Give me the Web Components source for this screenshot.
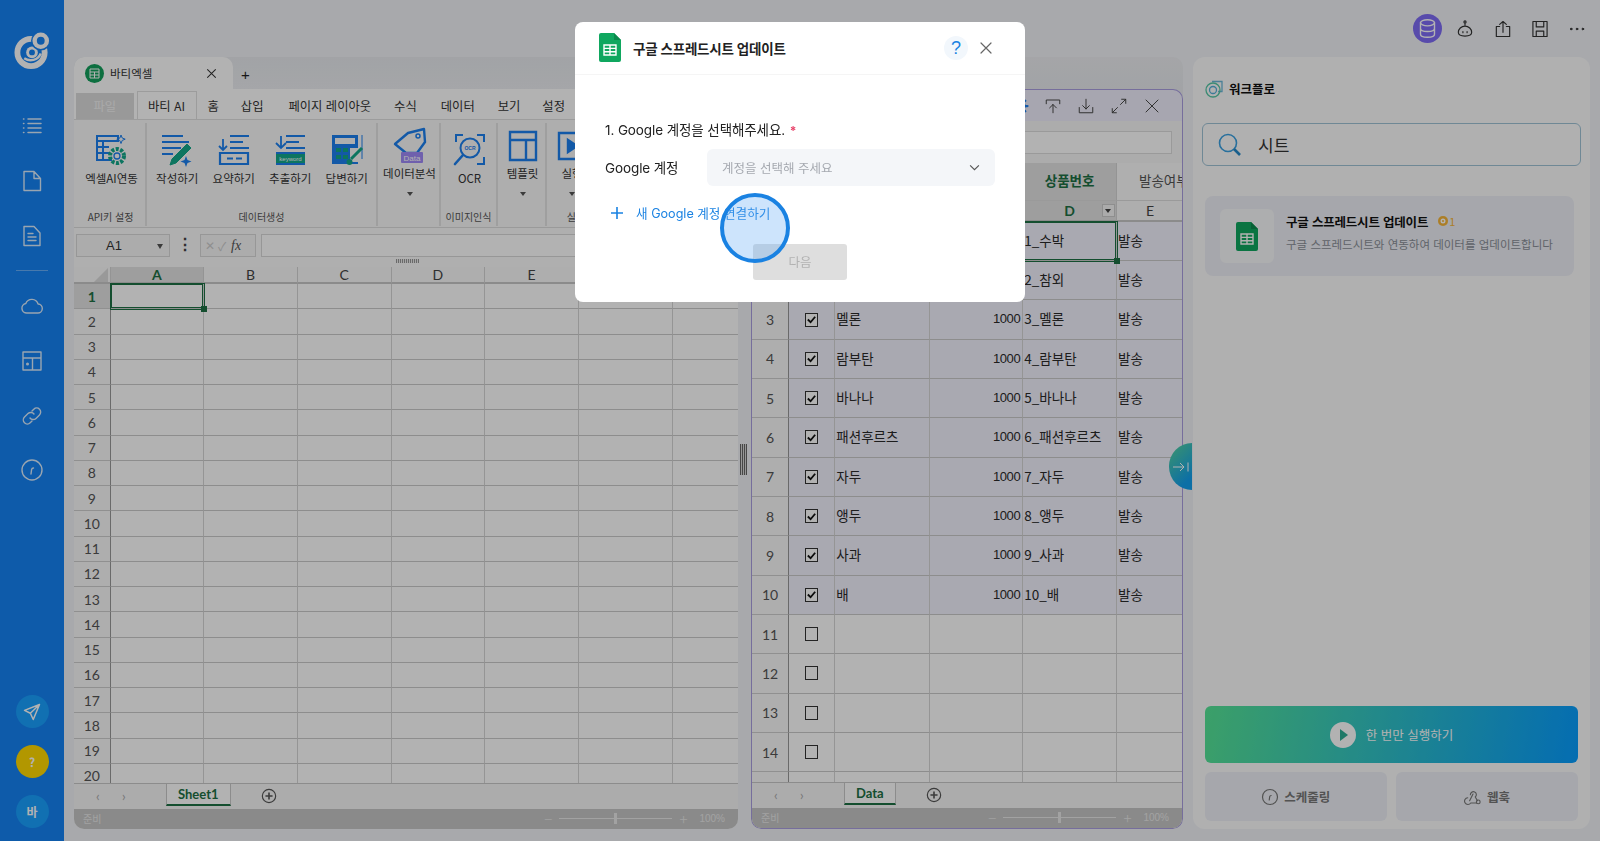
<!DOCTYPE html>
<html lang="ko">
<head>
<meta charset="utf-8">
<title>바티 AI</title>
<style>
    html, body { margin: 0; height: 100%; overflow: hidden; }
    body { font-family: "Noto Sans CJK KR", "Noto Sans", sans-serif; background: #f1f3f7; color: #222; }
</style>
</head>
<body>
<app-shell>
    <app-sidebar slot="side"></app-sidebar>
    <top-actions slot="top"></top-actions>
    <sheet-panel slot="left" sheet="Sheet1">
        <excel-tabstrip slot="head"></excel-tabstrip>
        <excel-ribbon slot="head"></excel-ribbon>
        <excel-formula slot="head"></excel-formula>
        <sheet-grid id="grid-left"></sheet-grid>
    </sheet-panel>
    <sheet-panel slot="right" sheet="Data" tint>
        <sheet-titlebar slot="head"></sheet-titlebar>
        <sheet-grid id="grid-right"></sheet-grid>
    </sheet-panel>
    <workflow-panel slot="flow"></workflow-panel>
</app-shell>
<modal-dialog heading="구글 스프레드시트 업데이트"></modal-dialog>
<click-ripple></click-ripple>

<script>
const SHEET_ICON = `<svg viewBox="0 0 22 29" width="22" height="29"><path d="M2 0h13l7 7v20a2 2 0 0 1-2 2H2a2 2 0 0 1-2-2V2a2 2 0 0 1 2-2z" fill="#0fa75f"/><path d="M15 0l7 7h-7z" fill="#0b8a4d"/><path d="M5 12h12v10H5zM5 15.4h12M5 18.8h12M11 12v10" fill="none" stroke="#fff" stroke-width="1.4"/></svg>`;

const line = (inner, w = 24, sw = 1.5, vb = 24) => `<svg viewBox="0 0 ${vb} ${vb}" width="${w}" height="${w}" fill="none" stroke="currentColor" stroke-width="${sw}" stroke-linecap="round" stroke-linejoin="round">${inner}</svg>`;

class AppShell extends HTMLElement {
    constructor() {
        super();
        this.attachShadow({mode: 'open'}).innerHTML = `
        <style>
            :host { display: flex; width: 1600px; height: 841px; background: #f1f3f7; }
            #main { flex: 1; display: flex; flex-direction: column; min-width: 0; padding: 0 10px 12px; box-sizing: border-box; }
            #work { flex: 1; display: flex; min-height: 0; position: relative; }
            #split { width: 13px; display: flex; align-items: center; justify-content: flex-start; margin-top: 32px; }
            #grip { width: 7px; height: 31px; margin-left: 2px; background: repeating-linear-gradient(90deg, #666 0 1px, #d8d8d8 1px 2px); }
            #flow { margin-left: 10px; display: flex; width: 397px; }
            #l { display: flex; width: 664px; }
            #r { display: flex; width: 432px; }
            #collapse { position: absolute; left: 1095px; top: 386px; width: 23px; height: 47px; border-radius: 24px 0 0 24px; background: linear-gradient(135deg, #58d69a, #12a0ee 80%); color: #fff; display: flex; align-items: center; justify-content: center; }
        </style>
        <slot name="side"></slot>
        <div id="main">
            <slot name="top"></slot>
            <div id="work">
                <div id="l"><slot name="left"></slot></div>
                <div id="split"><div id="grip"></div></div>
                <div id="r"><slot name="right"></slot></div>
                <div id="flow"><slot name="flow"></slot></div>
                <div id="collapse"><svg width="18" height="14" viewBox="0 0 18 14" fill="none" stroke="currentColor" stroke-width="1"><path d="M1 7h11M8 3l4 4-4 4M16 2.500v9"/></svg></div>
            </div>
        </div>`;
    }
}
customElements.define('app-shell', AppShell);

class AppSidebar extends HTMLElement {
    constructor() {
        super();
        const icons = [
            `<path d="M8 5h13M8 9.500h13M8 14h13M8 18.500h13" stroke-width="1.500"/><path d="M3.500 5h.4M3.500 9.500h.4M3.500 14h.4M3.500 18.500h.4" stroke-width="1.500"/>`,
            `<path d="M4 2.500h10l6.500 7V21.500H4zM14 2.500v7h6.500"/>`,
            `<path d="M4 2.500h10l6 6.500V21.500H4zM8 9.500h5M8 13h8M8 16.500h8"/>`,
            null,
            `<path d="M7 19h10.500a4.500 4.500 0 0 0 .6-9A6.500 6.500 0 0 0 5.800 9.500 4.800 4.800 0 0 0 7 19z"/>`,
            `<path d="M3 3h18v18H3zM3 9h18M12.500 9v12"/><circle cx="7.500" cy="15" r=".8" fill="currentColor"/>`,
            `<path d="M10 14a4 4 0 0 0 6 .4l3.500-3.500a4 4 0 0 0-5.700-5.700L12 7"/><path d="M14 10a4 4 0 0 0-6-.4l-3.500 3.500a4 4 0 0 0 5.700 5.700L12 17"/>`,
            `<circle cx="12" cy="12" r="10"/><path d="M11 16l.6-4.500c.2-1 .9-1.500 1.900-1.500"/>`
        ];
        this.attachShadow({mode: 'open'}).innerHTML = `
        <style>
            :host { display: flex; flex-direction: column; align-items: center; width: 64px; height: 841px; background: #1583f4; color: #fff; flex: none; font-family: "Noto Sans CJK KR", sans-serif; box-sizing: border-box; }
            #logo { margin: 32px 0 0 -1px; height: 37px; }
            nav { display: flex; flex-direction: column; align-items: center; margin-top: 30px; }
            .ic { height: 54.700px; width: 64px; display: flex; align-items: center; justify-content: center; }
            .ic svg { opacity: .85; }
            hr { width: 32px; margin: 7px 0 8px; border: 0; border-top: 1px solid rgba(255,255,255,.35); }
            #foot { margin-top: auto; display: flex; flex-direction: column; gap: 17px; padding-bottom: 13px; align-items: center; }
            .round { width: 33px; height: 33px; border-radius: 50%; display: flex; align-items: center; justify-content: center; background: #19a1ff; font-size: 12px; font-weight: 700; color: #fff; }
            .gold { background: #ffd900; }
        </style>
        <svg id="logo" viewBox="0 0 36 38" width="36" height="38" fill="none">
            <circle cx="17" cy="21" r="14" stroke="#fff" stroke-width="6"/>
            <path d="M10 27c6 4 14 2 17-5" stroke="#fff" stroke-width="2.500"/>
            <circle cx="18" cy="21" r="6" fill="#fff"/>
            <circle cx="18" cy="21" r="3" fill="#1583f4"/>
            <circle cx="27" cy="9" r="10" fill="#1583f4"/>
            <circle cx="27" cy="9" r="8.500" fill="#fff"/>
            <circle cx="27" cy="9" r="4" fill="#1583f4"/>
        </svg>
        <nav>${icons.map(i => i ? `<div class="ic">${line(i, 24, 1.4)}</div>` : `<hr>`).join('')}</nav>
        <div id="foot">
            <div class="round"><svg width="20" height="20" viewBox="0 0 24 24" fill="none" stroke="#fff" stroke-width="1.800" stroke-linejoin="round"><path d="M21 3L3 10l7 3.500L13.500 21zM10 13.500L21 3"/></svg></div>
            <div class="round gold">?</div>
            <div class="round">바</div>
        </div>`;
    }
}
customElements.define('app-sidebar', AppSidebar);

class TopActions extends HTMLElement {
    constructor() {
        super();
        this.attachShadow({mode: 'open'}).innerHTML = `
        <style>
            :host { display: flex; height: 57px; flex: none; justify-content: flex-end; align-items: flex-start; padding: 14px 0 0; box-sizing: border-box; color: #333; }
            .b { width: 37.400px; height: 29px; display: flex; align-items: center; justify-content: center; }
            #db { color: #fff; }
            #db span { width: 29px; height: 29px; border-radius: 50%; background: #7f6cf5; display: flex; align-items: center; justify-content: center; }
        </style>
        <div class="b" id="db"><span>${line(`<ellipse cx="12" cy="5.500" rx="8" ry="3.500"/><path d="M4 5.500v13c0 2 3.600 3.500 8 3.500s8-1.500 8-3.500v-13M4 12c0 2 3.600 3.500 8 3.500s8-1.500 8-3.500"/>`, 21, 1.6)}</span></div>
        <div class="b">${line(`<circle cx="12" cy="3.500" r="1.300"/><path d="M12 5v3.500M4 16c0-4 3.500-7.500 8-7.500s8 3.500 8 7.500c0 3-3 4.500-8 4.500S4 19 4 16zM9.500 15v1.500M14.500 15v1.500"/>`, 20, 1.400)}</div>
        <div class="b">${line(`<path d="M8 9H4v12h16V9h-4M12 16V3M8 6.500L12 3l4 3.500"/>`, 20, 1.400)}</div>
        <div class="b">${line(`<path d="M3.500 3h17v18h-17zM7.500 3v6.500h9V3M7.500 21v-6.500h9V21"/>`, 20, 1.400)}</div>
        <div class="b" style="margin-right:-6px">${line(`<circle cx="5" cy="12" r="1" fill="currentColor"/><circle cx="12" cy="12" r="1" fill="currentColor"/><circle cx="19" cy="12" r="1" fill="currentColor"/>`, 20, 1.200)}</div>`;
    }
}
customElements.define('top-actions', TopActions);

class SheetPanel extends HTMLElement {
    constructor() {
        super();
        this.attachShadow({mode: 'open'}).innerHTML = `
        <style>
            :host { display: flex; flex-direction: column; flex: 1; min-width: 0; box-sizing: border-box; overflow: hidden; border-radius: 10px; font-family: "Noto Sans CJK KR", "Noto Sans", sans-serif; background: linear-gradient(#e8eaee, #eceef2 32px); }
            :host([tint]) { padding-top: 32px; background: linear-gradient(#ecedf1, #e8eaee 32px); }
            #body { flex: 1; display: flex; flex-direction: column; min-height: 0; background: #fff; }
            :host([tint]) #body { border: 1px solid #a99ee0; border-top: 0; border-radius: 0 0 10px 10px; overflow: hidden; }
            #tabs { height: 26px; flex: none; display: flex; align-items: stretch; background: #f6f6f6; border-top: 1px solid #c9c9c9; box-sizing: border-box; padding-left: 92px; position: relative; font-family: Lato, sans-serif; }
            .nav { position: absolute; top: 4px; color: #aaa; font-size: 13px; }
            #tab { padding: 0 11px; margin-top: -1px; background: #fff; border: 1px solid #c9c9c9; border-bottom: 2px solid #1d7044; height: 23px; box-sizing: border-box; display: flex; align-items: center; color: #1d7044; font-weight: 700; font-size: 13px; }
            #add { margin: 3px 0 0 29px; width: 18px; height: 18px; color: #555; }
            #status { height: 20.300px; flex: none; display: flex; align-items: center; background: #c6c6c6; color: #e9e9e9; font-size: 10px; padding: 0 13px 0 9px; box-sizing: border-box; }
            #status .sp { flex: 1; }
            #slider { width: 113px; height: 1px; background: #e9e9e9; margin: 0 7px; position: relative; }
            #slider i { position: absolute; left: 55px; top: -5px; width: 3px; height: 11px; background: #e9e9e9; }
            #pct { margin-left: 12px; font-family: "Liberation Sans", sans-serif; }
            .pm { font-size: 15px; font-weight: 300; line-height: 1; }
        </style>
        <slot name="head"></slot>
        <div id="body">
            <slot></slot>
            <div id="tabs">
                <span class="nav" style="left:22px">‹</span><span class="nav" style="left:48px">›</span>
                <div id="tab">${this.getAttribute('sheet')}</div>
                <div id="add"><svg viewBox="0 0 18 18" width="16" height="16" style="margin:1px" fill="none" stroke="currentColor" stroke-width="1.300"><circle cx="9" cy="9" r="7.500"/><path d="M5 9h8M9 5v8" stroke-width="1.800"/></svg></div>
            </div>
            <div id="status"><span>준비</span><span class="sp"></span><span class="pm">−</span><div id="slider"><i></i></div><span class="pm">+</span><span id="pct">100%</span></div>
        </div>`;
    }
}
customElements.define('sheet-panel', SheetPanel);

class ExcelTabstrip extends HTMLElement {
    constructor() {
        super();
        this.attachShadow({mode: 'open'}).innerHTML = `
        <style>
            :host { display: flex; height: 32px; align-items: stretch; }
            #t { width: 159px; background: #fff; border-radius: 10px 10px 0 0; display: flex; align-items: center; padding: 0 16px 0 11px; box-sizing: border-box; font-size: 11.500px; color: #333; }
            #g { width: 19px; height: 19px; border-radius: 50%; background: #14a05c; color: #fff; display: flex; align-items: center; justify-content: center; margin-right: 6px; }
            .s { flex: 1; }
            #plus { margin-left: 8px; align-self: center; font-size: 15px; color: #222; font-family: "Liberation Sans", sans-serif; margin-top: 3px; }
        </style>
        <div id="t"><div id="g"><svg width="11" height="11" viewBox="0 0 11 11" fill="none" stroke="#fff" stroke-width="1"><path d="M1 1h9v9H1zM1 4h9M1 7h9M5.500 4v6"/></svg></div>바티엑셀<span class="s"></span>
        ${line(`<path d="M2 2l10 10M12 2L2 12"/>`, 11, 1.300, 14)}</div>
        <div id="plus">+</div>`;
    }
}
customElements.define('excel-tabstrip', ExcelTabstrip);

const B = '#1c80f0', T = '#14a88a';
const RIBBON_ICONS = {
    ai: `<svg viewBox="0 0 34 34" width="34" height="34" fill="none" stroke="${B}" stroke-width="2"><path d="M2 3h21v5H2zM2 8h16M2 8v19h15M2 14h12M2 20h12M8 8v19"/><path d="M26 2l1.200 3 3 1.200-3 1.200L26 10.500l-1.200-3-3-1.200 3-1.200z" stroke-width="1"/><circle cx="22" cy="23" r="7" stroke="${T}" stroke-width="4" stroke-dasharray="3 1.500"/><circle cx="22" cy="23" r="3" stroke="${B}" stroke-width="1.300"/></svg>`,
    write: `<svg viewBox="0 0 34 34" width="34" height="34" fill="none" stroke="${B}" stroke-width="2.200"><path d="M2 3h21M2 9h27M2 15h19M2 21h11"/><path d="M27 11l4 4-15 15-6 2 2-6z" fill="${T}" stroke="${T}" stroke-width="1"/><path d="M26 23l1.500 4 4 1.500-4 1.500-1.500 4-1.500-4-4-1.500 4-1.500z" fill="${B}" stroke="none"/></svg>`,
    sum: `<svg viewBox="0 0 34 34" width="34" height="34" fill="none" stroke="${B}" stroke-width="2.200"><path d="M13 3h19M13 9h13M13 15h19M6 6v11M2 13l4 4 4-4" stroke-width="1.800"/><path d="M3 20h28v11H3z"/><path d="M10 25.500h6M19 25.500h6"/></svg>`,
    ext: `<svg viewBox="0 0 34 34" width="34" height="34" fill="none" stroke="${B}" stroke-width="2.200"><path d="M13 3h19M13 9h13M13 15h19M3 20h29M3 31h29"/><path d="M8 3v11M3 10l5 5 5-5" stroke-width="1.800"/><rect x="3" y="21" width="29" height="9" fill="${T}" stroke="none"/><text x="17.500" y="28" font-size="6" fill="#fff" stroke="none" text-anchor="middle" font-family="Liberation Sans">keyword</text></svg>`,
    ans: `<svg viewBox="0 0 34 34" width="34" height="34" fill="none"><path d="M2 2h26v29H2z" fill="${B}"/><path d="M5 5h20v6H5z" fill="#f9f9f9"/><path d="M6 15h5v4H6zM13 15h5v4h-5zM6 22h5v4H6zM13 22h5v4h-5z" fill="${T}"/><path d="M32 2v24" stroke="${B}" stroke-width="1"/><path d="M20 15h8v14h-8z" fill="#f9f9f9"/><path d="M32 15L21 26" stroke="${T}" stroke-width="3"/><circle cx="19.500" cy="29" r="3" fill="${T}"/></svg>`,
    data: `<svg viewBox="0 0 34 38" width="34" height="38" fill="none"><path d="M31 3l1 13-8 11H13L2 18 15 7z" stroke="${B}" stroke-width="2.400" stroke-linejoin="round" transform="translate(0,-1)"/><circle cx="25" cy="9" r="2" stroke="${B}" stroke-width="1.500"/><rect x="8" y="25" width="22" height="11" rx="1" fill="#a08af8"/><text x="19" y="34" font-size="8" fill="#fff" text-anchor="middle" font-family="Liberation Sans">Data</text></svg>`,
    ocr: `<svg viewBox="0 0 34 34" width="34" height="34" fill="none" stroke="${B}" stroke-width="2"><path d="M3 9V2h7M24 2h7v7M31 24v7h-7"/><circle cx="17" cy="15" r="9.500" stroke-width="2"/><path d="M10 22l-8 9" stroke-width="2.600" stroke-linecap="round"/><text x="17" y="17" font-size="5" fill="${B}" stroke="none" text-anchor="middle" font-family="Liberation Sans" font-weight="700">OCR</text></svg>`,
    tpl: `<svg viewBox="0 0 30 32" width="30" height="32" fill="none" stroke="${B}" stroke-width="2.400"><path d="M2 2h26v28H2zM2 10h26M18 10v20"/></svg>`,
    run: `<svg viewBox="0 0 30 32" width="30" height="32" fill="none" stroke="${B}" stroke-width="2.400"><path d="M2 3h26v26H2z"/><path d="M11 10l9 6-9 6z" fill="${B}"/></svg>`
};

class ExcelRibbon extends HTMLElement {
    constructor() {
        super();
        const tabs = ['홈', '삽입', '페이지 레이아웃', '수식', '데이터', '보기', '설정', '자동화', '도움말'];
        const gaps = [11, 22, 25, 23, 24, 23, 22, 23, 23];
        const groups = [
            {w: 71, label: 'API키 설정', items: [{i: 'ai', t: '엑셀AI연동', w: 71}]},
            {w: 231, label: '데이터생성', pad: 2, items: [{i: 'write', t: '작성하기', w: 56.500}, {i: 'sum', t: '요약하기', w: 56.500}, {i: 'ext', t: '추출하기', w: 56.500}, {i: 'ans', t: '답변하기', w: 56.500}]},
            {w: 63, items: [{i: 'data', t: '데이터분석', w: 63, drop: 1}]},
            {w: 57, label: '이미지인식', items: [{i: 'ocr', t: 'OCR', w: 57}]},
            {w: 49, items: [{i: 'tpl', t: '템플릿', w: 49, drop: 1}]},
            {w: 60, label: '실행', items: [{i: 'run', t: '실행', w: 50, drop: 1}]}
        ];
        this.attachShadow({mode: 'open'}).innerHTML = `
        <style>
            :host { display: block; background: #fff; flex: none; padding-top: 3px; }
            #tabs { display: flex; height: 28px; align-items: flex-end; padding: 0 0 0 2px; border-bottom: 1px solid #e0e0e0; box-sizing: border-box; font-size: 12.300px; color: #333; }
            #tabs div { height: 26px; display: flex; align-items: center; white-space: nowrap; box-sizing: border-box; }
            #tabs #file { width: 57.500px; justify-content: center; background: #dcdcdc; color: #f3f3f3; margin-right: 3px; }
            #tabs #on { height: 28px; width: 60px; justify-content: center; background: #fff; border: 1px solid #e0e0e0; border-bottom: 0; }
            #tabs .t { margin-left: var(--g); }
            #rib { display: flex; height: 108px; padding: 3px 0 1px 2px; box-sizing: border-box; background: #f9f9f9; border-bottom: 1px solid #ddd; overflow: hidden; }
            .grp { flex: none; display: flex; flex-direction: column; border-right: 2px solid #e4e4e4; box-sizing: border-box; }
            .its { flex: 1; display: flex; }
            .it { display: flex; flex-direction: column; align-items: center; flex: none; padding-top: 10px; font-size: 11.500px; color: #333; white-space: nowrap; box-sizing: border-box; }
            .it .ico { height: 34px; display: flex; align-items: center; }
            .it .tx { margin-top: 3px; }
            .it.dd { padding-top: 6px; }
            .it.dd .tx { margin-top: 2px; }
            .car { width: 0; height: 0; border: 3.500px solid transparent; border-top: 4px solid #555; margin-top: 11px; }
            .lab { text-align: center; font-size: 10px; color: #555; height: 19px; line-height: 19px; }
        </style>
        <div id="tabs">
            <div id="file">파일</div><div id="on">바티 AI</div>
            ${tabs.map((t, i) => `<div class="t" style="--g:${gaps[i]}px">${t}</div>`).join('')}
        </div>
        <div id="rib">
            ${groups.map(g => `<div class="grp" style="width:${g.w}px">
                <div class="its" ${g.pad ? `style="padding-left:${g.pad}px"` : ''}>${g.items.map(it => `
                    <div class="it ${it.drop ? 'dd' : ''}" style="width:${it.w}px"><div class="ico">${RIBBON_ICONS[it.i]}</div><div class="tx">${it.t}</div>${it.drop ? '<div class="car"></div>' : ''}</div>`).join('')}</div>
                <div class="lab">${g.label || ''}</div>
            </div>`).join('')}
        </div>`;
    }
}
customElements.define('excel-ribbon', ExcelRibbon);

class ExcelFormula extends HTMLElement {
    constructor() {
        super();
        this.attachShadow({mode: 'open'}).innerHTML = `
        <style>
            :host { display: block; height: 38.500px; flex: none; background: #fbfbfb; padding: 6px 0 0 2px; box-sizing: border-box; font-family: "Liberation Sans", sans-serif; color: #333; position: relative; }
            #row { display: flex; height: 23px; }
            #name { width: 94px; border: 1px solid #d8d8d8; background: #f7f7f7; box-sizing: border-box; display: flex; align-items: center; justify-content: space-between; padding: 0 6px 0 29px; font-size: 13px; }
            #name i { border: 3.500px solid transparent; border-top: 5px solid #555; margin-top: 4px; }
            #more { width: 30px; text-align: center; line-height: 22px; font-weight: 700; font-size: 16px; color: #444; }
            #fx { width: 56px; border: 1px solid #d8d8d8; background: #f7f7f7; box-sizing: border-box; display: flex; align-items: center; gap: 3px; padding-left: 4px; color: #ccc; font-size: 12px; }
            #fx em { font-family: "Liberation Serif", serif; color: #555; font-size: 14px; margin-left: 2px; }
            #inp { flex: 1; margin-left: 5px; border: 1px solid #d8d8d8; background: #fff; }
            #grip { width: 23px; height: 4px; margin: 2px 0 0 320px; background: repeating-linear-gradient(90deg, #999 0 1px, #eee 1px 2px); }
        </style>
        <div id="row"><div id="name">A1<i></i></div><div id="more">⋮</div><div id="fx">✕<span>✓</span><em>fx</em></div><div id="inp"></div></div>
        <div id="grip"></div>`;
    }
}
customElements.define('excel-formula', ExcelFormula);

class SheetTitlebar extends HTMLElement {
    constructor() {
        super();
        this.attachShadow({mode: 'open'}).innerHTML = `
        <style>
            :host { display: block; flex: none; }
            #bar { height: 32px; background: #f0eefc; display: flex; justify-content: flex-end; align-items: center; gap: 15px; padding-right: 21px; color: #444; border-radius: 10px 10px 0 0; border: 1px solid #a99ee0; border-bottom: 0; box-sizing: border-box; }
            #gear { color: #1c80f0; display: flex; }
            #fx { height: 42px; background: #f7f7f7; display: flex; align-items: center; justify-content: flex-end; padding: 0 10px 0 0; box-sizing: border-box; border-left: 1px solid #a99ee0; border-right: 1px solid #a99ee0; }
            #fx div { width: 400px; height: 23px; background: #fff; border: 1px solid #ddd; box-sizing: border-box; }
        </style>
        <div id="bar">
            <span id="gear">${line(`<circle cx="12" cy="12" r="5.500" stroke-width="4"/><path d="M12 2v3M12 19v3M2 12h3M19 12h3M5 5l2 2M17 17l2 2M19 5l-2 2M5 19l2-2" stroke-width="3"/>`, 18, 2)}</span>
            ${line(`<path d="M3 9V4h18v5M12 21V10M7.500 14.500L12 10l4.500 4.500"/>`, 18, 1.300)}
            ${line(`<path d="M3 14v7h18v-7M12 3v13M7.500 11.500L12 16l4.500-4.500"/>`, 18, 1.300)}
            ${line(`<path d="M14 10l7-7M15.500 3H21v5.500M10 14l-7 7M3 15.500V21h5.500"/>`, 18, 1.300)}
            ${line(`<path d="M4 4l16 16M20 4L4 20"/>`, 18, 1.300)}
        </div>
        <div id="fx"><div></div></div>`;
    }
}
customElements.define('sheet-titlebar', SheetTitlebar);

class SheetGrid extends HTMLElement {
    // config is set by the page script
    set config(c) {
        const letters = 'ABCDEFGH';
        const cols = c.cols.map(w => w + 'px').join(' ');
        let html = '';
        if (c.names) {
            html += `<div class="h nm"></div>` + c.names.map((n, i) => `<div class="h nm ${i === c.selCol ? 'on' : ''} ${i === c.names.length - 1 ? 'end' : ''}">${n}</div>`).join('');
        }
        html += `<div class="h lt corner">${c.names ? '' : '<i></i>'}</div>`;
        for (let i = 0; i < c.cols.length - 1; i++) {
            html += `<div class="h lt ${i === c.selCol ? 'on' : ''}">${letters[i]}${c.filter && i === c.selCol ? '<b></b>' : ''}</div>`;
        }
        for (let r = 0; r < c.rowCount; r++) {
            const row = c.rows && c.rows[r];
            const num = r < c.numbered ? r + 1 : '';
            html += `<div class="n ${r === 0 && c.selRowHi ? 'on' : ''}">${num}</div>`;
            for (let i = 0; i < c.cols.length - 1; i++) {
                const sel = r === 0 && i === c.selCol;
                let val = '', cls = '';
                if (c.check && i === c.check.col && r < c.check.total) {
                    val = `<span class="cb">${r < c.check.n ? '<svg viewBox="0 0 12 12" width="11" height="11"><path d="M2 6l3 3 5-6" fill="none" stroke="#111" stroke-width="2"/></svg>' : ''}</span>`;
                    cls = 'mid';
                } else if (row && row[i] !== undefined) {
                    val = row[i];
                    if (c.right === i) cls = 'right';
                }
                html += `<div class="c ${cls} ${row ? 'tint' : ''} ${sel ? 'sel' : ''}">${val}${sel ? '<u></u>' : ''}</div>`;
            }
        }
        this.attachShadow({mode: 'open'}).innerHTML = `
        <style>
            :host { display: block; flex: 1; min-height: 0; overflow: hidden; background: #fff; font-family: "Noto Sans CJK KR", sans-serif; color: #2a2a2a; isolation: isolate; }
            #g { display: grid; grid-template-columns: ${cols}; grid-auto-rows: ${c.rowH}px; grid-template-rows: ${c.names ? `${c.nameH}px ` : ''}${c.headH}px; }
            div { box-sizing: border-box; overflow: hidden; white-space: nowrap; }
            .h { background: #f9f9f9; border-right: 1px solid #d4d4d4; border-bottom: 2px solid #c8c8c8; display: flex; align-items: center; justify-content: center; font-size: 14px; color: #444; position: relative; font-family: Lato, "Noto Sans CJK KR", sans-serif; }
            .h.nm { background: #fbfbfb; border-bottom: 1px solid #ddd; font-size: 13.500px; font-family: "Noto Sans CJK KR", sans-serif; color: #555; padding-bottom: 3px; }
            .h.nm.end { justify-content: flex-start; padding-left: 22px; }
            .h.on { background: #e2e2e2; color: #1d7044; font-weight: 700; }
            .h b { position: absolute; right: 1px; top: 3px; width: 13px; height: 13px; background: #f5f5f5; border: 1px solid #ccc; box-sizing: border-box; }
            .h b::after { content: ""; position: absolute; left: 2px; top: 4px; border: 3.500px solid transparent; border-top: 4px solid #444; }
            .corner i { position: absolute; right: 2px; bottom: 0; border-left: 14px solid transparent; border-bottom: 14px solid #dcdcdc; }
            .n { background: #fafafa; border-right: 1px solid #999; border-bottom: 1px solid #cfcfcf; display: flex; align-items: center; justify-content: center; font-size: 14px; color: #555; font-family: Lato, sans-serif; }
            .n.on { background: #e2e2e2; color: #1d7044; font-weight: 700; }
            .c { border-right: 1px solid #d6d6d6; border-bottom: 1px solid #cbcbcb; font-size: 13.500px; line-height: ${c.rowH - 3}px; padding-left: 1px; position: relative; overflow: visible; }
            .c.tint { background: #f3f2fe; }
            .c.right { text-align: right; padding: 1px 2px 0 0; font-family: "Liberation Sans", sans-serif; font-size: 13px; letter-spacing: -.4px; }
            .c.mid { display: flex; align-items: center; justify-content: center; padding-right: 2px; }
            .c.sel { box-shadow: 0 0 0 1px #1d7044, inset 0 0 0 1px #1d7044; z-index: 1; }
            .c u { position: absolute; right: -4px; bottom: -4px; width: 6px; height: 6px; background: #1d7044; z-index: 2; }
            .cb { width: 13px; height: 14px; border: 1.500px solid #333; display: flex; align-items: center; justify-content: center; background: #fff; box-sizing: border-box; }
        </style>
        <div id="g">${html}</div>`;
    }
}
customElements.define('sheet-grid', SheetGrid);

class WorkflowPanel extends HTMLElement {
    constructor() {
        super();
        this.attachShadow({mode: 'open'}).innerHTML = `
        <style>
            :host { display: flex; flex-direction: column; width: 397px; background: #fdfdfd; border-radius: 12px; box-sizing: border-box; padding: 21px 9px 8px 9px; font-family: "Noto Sans CJK KR", sans-serif; color: #111; }
            #ttl { display: flex; align-items: center; gap: 5px; font-size: 12.500px; font-weight: 700; height: 20px; margin-left: 3px; }
            #search { margin-top: 25px; height: 43px; border: 1px solid #9fc3d6; border-radius: 6px; display: flex; align-items: center; padding-left: 15px; gap: 16px; font-size: 17px; color: #333; box-sizing: border-box; }
            #card { margin: 30px 7px 0 3px; height: 80px; background: #eef0f6; border-radius: 8px; display: flex; align-items: center; padding: 0 0 0 15px; }
            #ibox { width: 54px; height: 54px; background: #f8f9fb; border-radius: 6px; display: flex; align-items: center; justify-content: center; margin-right: 12px; }
            #txt { margin-top: -9px; }
            #ct { font-size: 12.500px; font-weight: 700; letter-spacing: -.2px; display: flex; align-items: center; gap: 10px; }
            #coin { color: #f5b53a; font-size: 11px; font-weight: 400; display: flex; gap: 1px; align-items: center; }
            #coin i { width: 10px; height: 10px; border-radius: 50%; background: #f5b53a; box-shadow: inset 0 0 0 2.500px #f5b53a, inset 0 0 0 4px #fff; }
            #cd { font-size: 11.500px; color: #8b8f98; margin-top: 5px; }
            #sp { flex: 1; }
            #run { margin: 0 3px; height: 57px; border-radius: 6px; background: linear-gradient(100deg, #56e596, #079dff); color: #fff; display: flex; align-items: center; justify-content: center; gap: 10px; font-size: 12.500px; }
            #play { width: 26px; height: 26px; border-radius: 50%; background: #fff; display: flex; align-items: center; justify-content: center; }
            #play::after { content: ""; border-left: 8px solid #2fae96; border-top: 6px solid transparent; border-bottom: 6px solid transparent; margin-left: 3px; }
            #btns { display: flex; gap: 9.500px; margin: 9px 3px 0; }
            #btns div { flex: 1; height: 49px; border-radius: 6px; background: #eef0f6; display: flex; align-items: center; justify-content: center; gap: 5px; font-size: 12.500px; font-weight: 700; color: #777; }
        </style>
        <div id="ttl"><svg width="19" height="19" viewBox="0 0 19 19" fill="none" stroke-width="1.300"><path d="M7 2.500h10v10H13" stroke="#6ab8d8"/><circle cx="8" cy="11" r="7" stroke="#55c7a5"/><circle cx="8" cy="11" r="3.500" stroke="#55b0d8"/></svg>워크플로</div>
        <div id="search"><svg width="24" height="24" viewBox="0 0 24 24" fill="none"><circle cx="10" cy="10" r="8.500" stroke="#3aa0e0" stroke-width="1.600"/><path d="M16 16l6 6" stroke="#2489c9" stroke-width="2.600"/></svg>시트</div>
        <div id="card">
            <div id="ibox">${SHEET_ICON}</div>
            <div id="txt"><div id="ct">구글 스프레드시트 업데이트 <span id="coin"><i></i>1</span></div><div id="cd">구글 스프레드시트와 연동하여 데이터를 업데이트합니다</div></div>
        </div>
        <div id="sp"></div>
        <div id="run"><span id="play"></span>한 번만 실행하기</div>
        <div id="btns">
            <div>${line(`<circle cx="12" cy="12" r="10"/><path d="M11 16l.6-4.500c.2-1 .9-1.500 1.900-1.500"/>`, 18, 1.600)}스케줄링</div>
            <div>${line(`<path d="M8.500 9a4 4 0 1 1 6.500 3l3 5"/><path d="M5 13a4.500 4.500 0 1 0 4 7h8"/><path d="M12 8l-4.500 9"/><circle cx="19" cy="18.500" r="2.500"/>`, 18, 1.500)}웹훅</div>
        </div>`;
    }
}
customElements.define('workflow-panel', WorkflowPanel);

class ModalDialog extends HTMLElement {
    constructor() {
        super();
        this.attachShadow({mode: 'open'}).innerHTML = `
        <style>
            :host { position: fixed; inset: 0; z-index: 10; display: flex; justify-content: center; align-items: flex-start; padding-top: 21.700px; box-sizing: border-box; background: rgba(0,0,0,.3); font-family: Inter, "Noto Sans CJK KR", sans-serif; color: #222; }
            #box { width: 450px; height: 280px; background: #fff; border-radius: 8px; display: flex; flex-direction: column; }
            header { height: 52px; flex: none; display: flex; align-items: center; padding: 0 33px 0 24px; border-bottom: 1px solid #f5f5f5; }
            h2 { margin: 0 0 0 12px; font-size: 13.500px; font-weight: 700; flex: 1; letter-spacing: -.2px; }
            #help { width: 24px; height: 24px; border-radius: 50%; background: #f2f7fc; color: #1a82e2; font: 400 18px/24px "Liberation Sans", sans-serif; text-align: center; margin-right: 12px; }
            #x { color: #666; height: 12px; display: flex; }
            main { padding: 46px 30px 0; display: flex; flex-direction: column; }
            #q { font-size: 13.500px; letter-spacing: -.1px; line-height: 18px; }
            #q em { color: #e8436a; font-style: normal; font-weight: 700; margin-left: 1px; font-size: 12px; }
            #f { display: flex; align-items: center; margin-top: 9px; }
            #f label { width: 102px; font-size: 13.500px; letter-spacing: -.1px; }
            #sel { flex: 1; height: 37px; background: #f4f6f9; border-radius: 6px; display: flex; align-items: center; justify-content: space-between; padding: 0 15px; font-size: 12.500px; color: #a5a9b0; }
            #link { display: flex; align-items: center; gap: 12px; margin: 17px 0 0 5px; color: #1a82e2; font-size: 12.600px; height: 20px; }
            #next { align-self: center; margin: 21px 0 0 0; width: 94px; height: 36px; border-radius: 3px; background: #dedede; color: #b2b2b2; font-size: 12.500px; display: flex; align-items: center; justify-content: center; }
        </style>
        <div id="box">
            <header>
                ${SHEET_ICON}
                <h2>${this.getAttribute('heading')}</h2>
                <div id="help">?</div>
                <div id="x">${line(`<path d="M1 1l10 10M11 1L1 11"/>`, 12, 1.200, 12)}</div>
            </header>
            <main>
                <div id="q">1. Google 계정을 선택해주세요. <em>*</em></div>
                <div id="f"><label>Google 계정</label>
                    <div id="sel">계정을 선택해 주세요<svg width="11" height="7" viewBox="0 0 12 8" fill="none" stroke="#555" stroke-width="1.300"><path d="M1 1.500l5 5 5-5"/></svg></div>
                </div>
                <div id="link"><svg width="14" height="14" viewBox="0 0 14 14" stroke="#1a82e2" stroke-width="1.600"><path d="M7 1v12M1 7h12"/></svg><span>새 Google 계정 연결하기</span></div>
                <div id="next">다음</div>
            </main>
        </div>`;
    }
}
customElements.define('modal-dialog', ModalDialog);

class ClickRipple extends HTMLElement {
    constructor() {
        super();
        this.attachShadow({mode: 'open'}).innerHTML = `
        <style>
            :host { position: fixed; z-index: 11; left: 720px; top: 193px; width: 70px; height: 70px; border-radius: 50%; box-sizing: border-box; border: 4px solid #1a82e2; background: rgba(100,170,245,.32); }
        </style>`;
    }
}
customElements.define('click-ripple', ClickRipple);

const fruits = ['수박', '참외', '멜론', '람부탄', '바나나', '패션후르츠', '자두', '앵두', '사과', '배'];

document.getElementById('grid-left').config = {
    cols: [36.500, 93.700, 93.700, 93.700, 93.700, 93.700, 93.700, 93.700],
    headH: 17.500, rowH: 25.250, rowCount: 20, numbered: 20, selCol: 0, selRowHi: true
};
document.getElementById('grid-right').config = {
    cols: [37, 46.300, 94.700, 93.300, 93.700, 67],
    names: ['', '', '', '상품번호', '발송여부'], nameH: 38, headH: 20.700, rowH: 39.330, rowCount: 15, numbered: 14,
    selCol: 3, filter: true, check: {col: 0, n: 10, total: 14},
    right: 2,
    rows: fruits.map((f, i) => ['', f, 1000, `${i + 1}_${f}`, '발송'])
};
</script>
</body>
</html>
